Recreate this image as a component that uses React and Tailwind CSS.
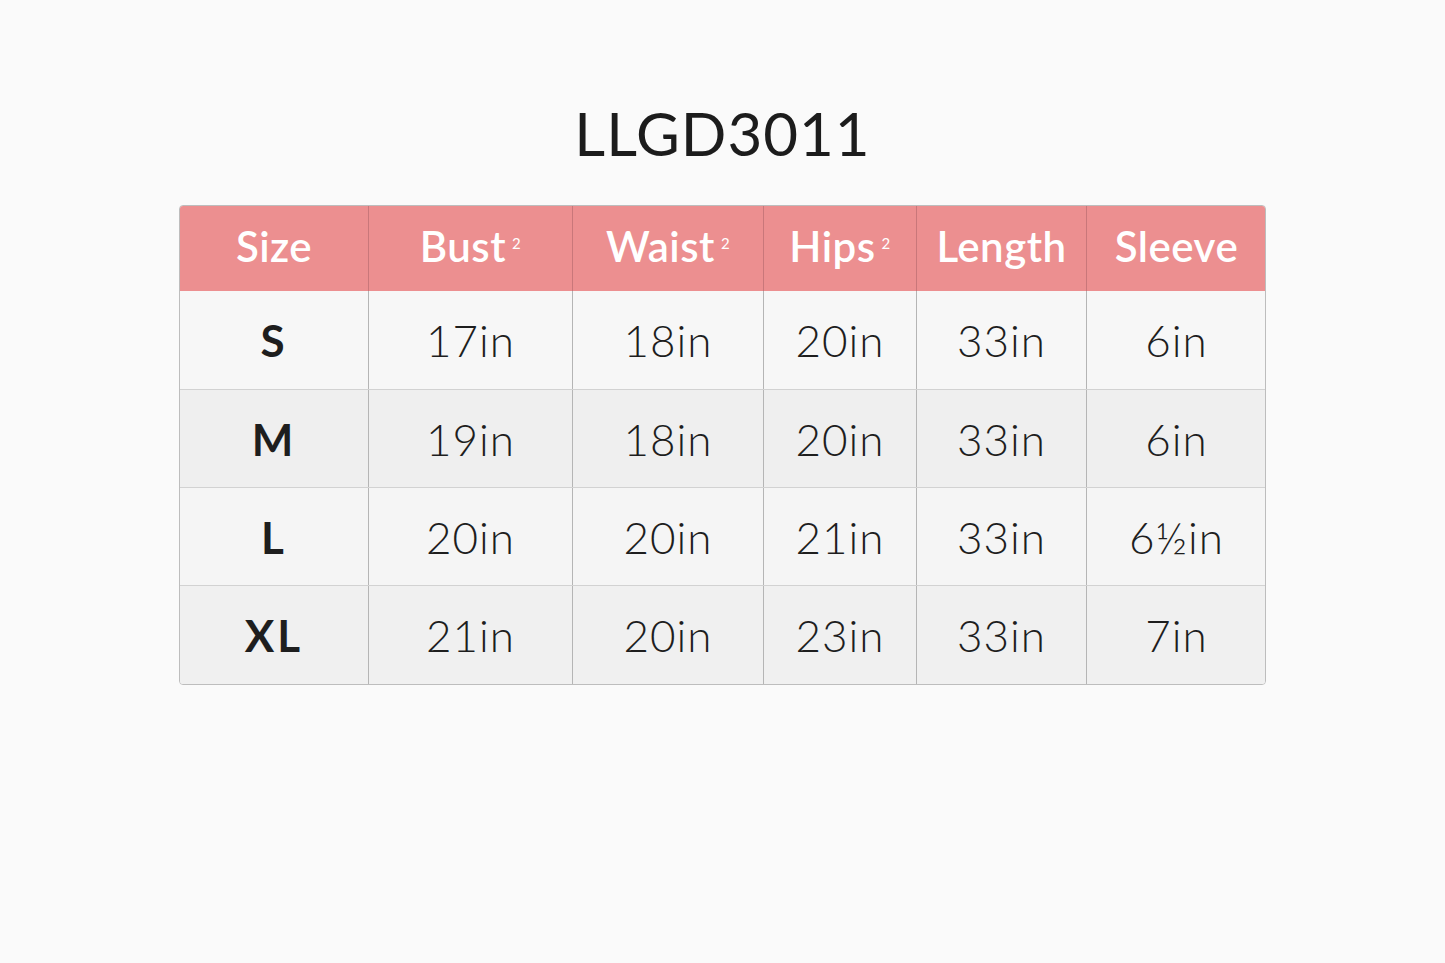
const cols = "grid grid-cols-[188px_204px_191px_153px_170px_180px]";

const headers = [
  { label: "Size" },
  { label: "Bust", sup: true },
  { label: "Waist", sup: true },
  { label: "Hips", sup: true },
  { label: "Length" },
  { label: "Sleeve" },
];

const rows = [
  ["S", "17in", "18in", "20in", "33in", "6in"],
  ["M", "19in", "18in", "20in", "33in", "6in"],
  ["L", "20in", "20in", "21in", "33in", "6½in"],
  ["XL", "21in", "20in", "23in", "33in", "7in"],
];

const rowBg = ["bg-[#f7f7f7]", "bg-[#efefef]", "bg-[#f5f5f5]", "bg-[#f0f0f0]"];

export default function App() {
  return (
    <div className="w-[1445px] h-[963px] bg-[#fafafa] flex flex-col items-center font-['Lato',sans-serif]">
      <h1 className="mt-[98px] text-[60px] leading-[70px] text-[#1c1c1c] tracking-[1px] font-normal">
        LLGD3011
      </h1>
      <div className="mt-[37px] w-[1087px] rounded-[4px] border border-[#bdbdbd] overflow-hidden">
        <div className={`${cols} h-[85px] bg-[#ec8f90]`}>
          {headers.map((h, i) => (
            <div
              key={h.label}
              className={`flex items-center justify-center text-white text-[42px] tracking-[0.5px] font-semibold pb-[4px] ${i > 0 ? "border-l border-[#c9777a]" : ""}`}
            >
              {h.label}
              {h.sup && <span className="text-[15px] ml-[6px] mb-[6px] font-normal">2</span>}
            </div>
          ))}
        </div>
        {rows.map((r, ri) => (
          <div
            key={r[0]}
            className={`${cols} ${ri === 3 ? "h-[99px]" : "h-[98px]"} ${rowBg[ri]} ${ri > 0 ? "border-t border-[#d2d2d2]" : ""}`}
          >
            {r.map((c, ci) => (
              <div
                key={ci}
                className={`flex items-center justify-center text-[#1e1e1e] text-[44px] ${ci === 0 ? "font-bold tracking-[3px]" : "font-light tracking-[1px]"} ${ci > 0 ? "border-l border-[#b5b5b5]" : ""}`}
              >
                {c}
              </div>
            ))}
          </div>
        ))}
      </div>
    </div>
  );
}
